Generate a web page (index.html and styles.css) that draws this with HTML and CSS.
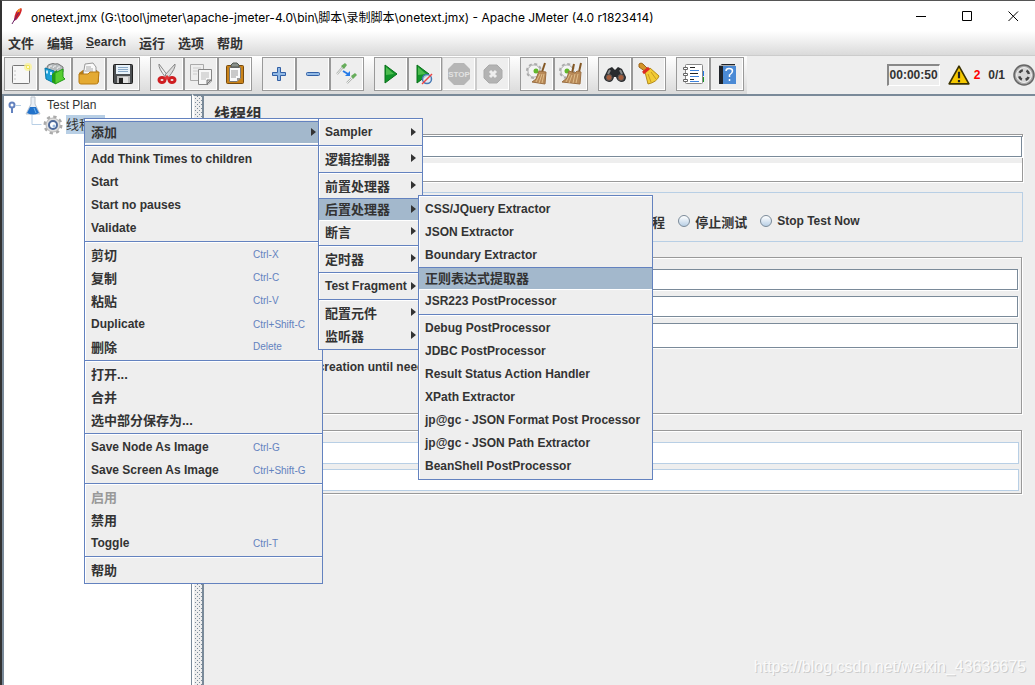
FILE: index.html
```html
<!DOCTYPE html>
<html lang="zh-CN">
<head>
<meta charset="utf-8">
<title>Apache JMeter</title>
<link rel="stylesheet" href="styles.css">
</head>
<body>
<header class="titlebar">
  <svg class="app-icon" viewBox="0 0 12 18"><path d="M10 1Q12 2 9 8Q7 12 3 14Q3 9 5 5Q7 2 10 1Z" fill="#d22128"/><path d="M10 1Q7 2 6 5L8 6Z" fill="#f59a23"/><path d="M4 10L3 14L6 12Z" fill="#9b2575"/><path d="M8 5L1 17" stroke="#6d2466" stroke-width="1"/></svg>
  <h1 class="title">onetext.jmx (G:\tool\jmeter\apache-jmeter-4.0\bin\脚本\录制脚本\onetext.jmx) - Apache JMeter (4.0 r1823414)</h1>
  <div class="window-buttons">
    <button aria-label="最小化"><svg viewBox="0 0 11 11"><path d="M0 5.5H10"/></svg></button>
    <button aria-label="最大化"><svg viewBox="0 0 11 11"><path d="M.5 .5H9.5V9.5H.5Z"/></svg></button>
    <button aria-label="关闭"><svg viewBox="0 0 11 11"><path d="M.5 .5L10 10M10 .5L.5 10"/></svg></button>
  </div>
</header>
<nav class="menubar">
  <button>文件</button><button>编辑</button><button class="latin"><u>S</u>earch</button><button>运行</button><button>选项</button><button>帮助</button>
</nav>
<div class="toolbar">
  <div class="tools">
    <div class="tool-group">
      <button aria-label="新建"><svg viewBox="0 0 24 24"><rect x="3.500" y="3.500" width="17" height="18" rx="1" fill="#f7f7f7" stroke="#777"/><path d="M5.500 9h1M5.500 13h1M5.500 17h1" stroke="#999"/><circle cx="19" cy="5" r="4" fill="#faf29a" opacity=".8"/><circle cx="19" cy="5" r="2" fill="#f4e84a"/><circle cx="19" cy="5" r="1" fill="#fff"/></svg></button>
      <button aria-label="模板"><svg viewBox="0 0 24 24"><path d="M4 5Q5 2 8 2Q10 1 12 2Q15 1 17 3L20 5V10L4 9Z" fill="#b6bbbd" stroke="#777"/><path d="M6 6Q7 3 9 4M10 6Q11 3 13 4M14 7Q15 4 17 5" stroke="#f2f2f2" fill="none"/><path d="M2 6L11 9V21L3 17Z" fill="#1d9fd6" stroke="#0878a8"/><path d="M4 8.500v3M8 10v3" stroke="#c8efff" stroke-width="2"/><path d="M9 12L14 8V20L12 22L9 20Z" fill="#239b18"/><path d="M12 11L20 7V15L22 17L12 22Z" fill="#57cd31" stroke="#239b18"/></svg></button>
      <button aria-label="打开"><svg viewBox="0 0 24 24"><path d="M2 11L6 8H20L22 13V20H3Z" fill="#b57b15"/><path d="M8 2L16 1L19 5V14H6Z" fill="#fafafa" stroke="#999"/><path d="M9 5h5M9 7h7M8 9h8" stroke="#aaa"/><path d="M2 12H11L13 10H22L21 21Q20 22 18 22H4Q2 22 2 20Z" fill="#e4aa32" stroke="#b77b12"/></svg></button>
      <button aria-label="保存"><svg viewBox="0 0 24 24"><rect x="2.500" y="2.500" width="19" height="19" rx="1" fill="#4b4e51" stroke="#222"/><path d="M5 3H19V12H5Z" fill="#e8f2fa"/><path d="M7 5.500h10M7 7.500h10M7 9.500h10" stroke="#8baac8"/><rect x="6" y="14" width="13" height="7" fill="#bbb"/><rect x="8" y="16" width="4" height="5" fill="#222"/><rect x="12" y="15" width="5" height="6" fill="#e5e5e5"/></svg></button>
    </div>
    <div class="tool-group">
      <button aria-label="剪切"><svg viewBox="0 0 24 24"><path d="M4 2Q3 6 11 16L13 14Z" fill="#eee" stroke="#888"/><path d="M20 2Q21 6 13 16L10 13Z" fill="#ddd" stroke="#888"/><g fill="none" stroke="#cf1e22" stroke-width="3"><ellipse cx="7" cy="18" rx="3" ry="2.500"/><ellipse cx="17" cy="18" rx="3" ry="2.500"/></g><path d="M9 16l3-3 3 3-3 2z" fill="#df3436"/></svg></button>
      <button aria-label="复制"><svg viewBox="0 0 24 24"><path d="M1.500 2.500H14.500V18.500H1.500Z" fill="#eee" stroke="#aaa"/><path d="M4 6h8M4 9h6M4 12h4" stroke="#ccc"/><path d="M9.500 7.500H22.500V19L19 22.500H9.500Z" fill="#f7f7f7" stroke="#888"/><path d="M12 11h8M12 13h8M12 15h8M12 17h5" stroke="#bbb"/><path d="M18 22V18H22Z" fill="#ccc" stroke="#777"/></svg></button>
      <button aria-label="粘贴"><svg viewBox="0 0 24 24"><rect x="3.500" y="3.500" width="17" height="18" rx="1" fill="#c98218" stroke="#774a0d"/><path d="M6.500 5.500H17.500V16L14 19.500H6.500Z" fill="#fafafa" stroke="#777"/><path d="M8 9h7M8 11h7M8 13h7M8 15h5" stroke="#999"/><path d="M8 5V3L10 1H14L16 3V5Z" fill="#89908a" stroke="#505750"/><path d="M14 19V16H18Z" fill="#999"/></svg></button>
    </div>
    <div class="tool-group">
      <button aria-label="展开"><svg viewBox="0 0 24 24"><path d="M10.500 5.500h3v5h5v3h-5v5h-3v-5h-5v-3h5z" fill="#91b9e5" stroke="#315fa5" stroke-linejoin="round"/></svg></button>
      <button aria-label="折叠"><svg viewBox="0 0 24 24"><rect x="5.500" y="10.500" width="13" height="3" rx="1" fill="#91b9e5" stroke="#315fa5"/></svg></button>
      <button aria-label="切换"><svg viewBox="0 0 24 24"><path d="M2 12L8 5" stroke="#aaa" stroke-width="2"/><path d="M2 12L8 5" stroke="#eef5ee"/><path d="M6 4L10 1L12 3L9 7Z" fill="#459c36" opacity=".8"/><path d="M12 21L17 16" stroke="#aaa" stroke-width="2"/><path d="M12 21L17 16" stroke="#eef5ee"/><path d="M16 14L20 11L22 13L18 17Z" fill="#459c36" opacity=".8"/><path d="M8 9L13 12" stroke="#267be8" stroke-width="2"/><path d="M10 14H15V9Z" fill="#267be8"/></svg></button>
    </div>
    <div class="tool-group">
      <button aria-label="启动"><svg viewBox="0 0 24 24"><path d="M6 3L18 12L6 21Z" fill="#11952a" stroke="#087019"/><path d="M7 5L15 12L7 13Z" fill="#4dbc4f"/></svg></button>
      <button aria-label="不间断启动"><svg viewBox="0 0 24 24"><path d="M4 3L16 12L4 21Z" fill="#11952a" stroke="#087019"/><path d="M5 5L13 12L5 13Z" fill="#4dbc4f"/><circle cx="14" cy="17" r="4.500" fill="#dfe8f5" fill-opacity=".8" stroke="#4779b5" stroke-width="1.500"/><path d="M9 22L19 12" stroke="#e44" stroke-width="1.500"/></svg></button>
      <button disabled aria-label="停止"><svg viewBox="0 0 24 24"><path d="M7 1H17L23 7V17L17 23H7L1 17V7Z" fill="#b6b6b6"/><text x="12" y="15" class="stop-text">STOP</text></svg></button>
      <button disabled aria-label="关闭"><svg viewBox="0 0 24 24"><path d="M8 3H16L21 8V16L16 21H8L3 16V8Z" fill="#b3b3b3" stroke="#aaa"/><path d="M9 9L15 15M15 9L9 15" stroke="#eee" stroke-width="3"/></svg></button>
    </div>
    <div class="tool-group">
      <button aria-label="清除"><svg viewBox="0 0 24 24"><circle cx="9" cy="9" r="7" fill="#ddd" stroke="#aaa" stroke-width="2" stroke-dasharray="3 2.500"/><circle cx="9" cy="9" r="6" fill="#f4f4f4" stroke="#bbb"/><circle cx="11" cy="9" r="2.500" fill="#63b82d"/><path d="M20 1L17 10" stroke="#835724" stroke-width="2"/><path d="M14 9L21 10L20 22L7 20L11 17Z" fill="#b98a58" stroke="#9b6f42"/><path d="M15 12L11 20M17 12L14 21M19 12L17 21" stroke="#e0bd89"/></svg></button>
      <button aria-label="全部清除"><svg viewBox="0 0 24 24"><circle cx="8" cy="9" r="7" fill="#ddd" stroke="#aaa" stroke-width="2" stroke-dasharray="3 2.500"/><circle cx="8" cy="9" r="6" fill="#f4f4f4" stroke="#bbb"/><circle cx="8" cy="9" r="2.500" fill="#63b82d"/><path d="M15 2L13 11M22 1L20 10" stroke="#835724" stroke-width="2"/><path d="M10 9L16 11L18 9L22 10L21 22L3 20L8 16Z" fill="#b98a58" stroke="#9b6f42"/><path d="M11 12L7 20M13 13L10 21M16 12L14 21M19 12L17 21" stroke="#e0bd89"/></svg></button>
    </div>
    <div class="tool-group">
      <button aria-label="查找"><svg viewBox="0 0 24 24"><path d="M1 15L5 7L9 5L12 8L15 5L19 7L23 15Q23 20 18 20Q14 19 13 15H11Q10 20 6 20Q1 19 1 15Z" fill="#292b2e"/><path d="M7 8L5 12M17 8L19 12" stroke="#888" stroke-width="2"/><circle cx="6" cy="15.500" r="3" fill="#a75d3b" stroke="#555"/><circle cx="18" cy="15.500" r="3" fill="#a75d3b" stroke="#555"/></svg></button>
      <button aria-label="重置查找"><svg viewBox="0 0 24 24"><path d="M2 2Q4 0 6 2L12 8L9 10L2 5Z" fill="#d49428" stroke="#9c651b"/><path d="M8 10L13 6L22 14Q20 20 11 22Z" fill="#f2cc35" stroke="#b58a1a"/><path d="M6 11L12 6" stroke="#dd2b22" stroke-width="3"/><path d="M11 12L14 20M14 10L19 17" stroke="#c89a22"/></svg></button>
    </div>
    <div class="tool-group">
      <button aria-label="函数助手"><svg viewBox="0 0 24 24"><path d="M21 9h2v5h-2z" fill="#2279e6"/><path d="M21 15h2v5h-2z" fill="#169b24"/><rect x="4.500" y="2.500" width="17" height="19" rx="1" fill="#fff" stroke="#888"/><path d="M9 5.500h5M9 11.500h8M9 17.500h4" stroke="#222"/><path d="M9 8.500h9M9 14.500h9M9 19.500h9" stroke="#3e83dc"/><g fill="#fff" stroke="#666"><path d="M2.500 5.500h4v2h-4zM2.500 11.500h4v2h-4zM2.500 17.500h4v2h-4z"/></g></svg></button>
      <button aria-label="帮助"><svg viewBox="0 0 24 24"><path d="M4 4L7 2H20V4L18 22H4Z" fill="#20242a"/><rect x="8" y="4" width="13" height="18" fill="#4b8ad5"/><path d="M5 3.500H20" stroke="#aaa"/><path d="M11 9Q11 6.500 14 6.500Q17.500 6.500 17.500 9Q17.500 11 14.500 13V15M14.500 17V19" fill="none" stroke="#fff" stroke-width="1.500"/></svg></button>
    </div>
  </div>
  <div class="status">
    <output class="timer">00:00:50</output>
    <svg class="warn" viewBox="0 0 20 18"><path d="M10 1L19 17H1Z" fill="#f5c800" stroke="#3b3200" stroke-width="1.500" stroke-linejoin="round"/><path d="M10 6V12M10 13.500V15.500" stroke="#222" stroke-width="2"/></svg>
    <span class="errors">2</span>
    <span class="threads">0/1</span>
    <svg class="light" viewBox="0 0 22 22"><circle cx="11" cy="11" r="10" fill="#aaa" stroke="#666" stroke-width="1.500"/><circle cx="11" cy="11" r="7.500" fill="#d5d5d5" stroke="#eee"/><circle cx="11" cy="11" r="5" fill="none" stroke="#444" stroke-width="2.500" stroke-dasharray="4 3.850" stroke-dashoffset="-2"/></svg>
  </div>
</div>
<div class="workspace">
  <aside class="tree">
    <div class="node">
      <svg class="handle" viewBox="0 0 16 20"><circle cx="5" cy="9" r="2.500" fill="#fff" stroke="#6382bf" stroke-width="2"/><path d="M5 12V17" stroke="#6382bf" stroke-width="2"/><path d="M8 9.500H14" stroke="#b8cfe5"/></svg>
      <svg class="flask" viewBox="0 0 20 20"><path d="M8 1H12V8L17 18H3L8 8Z" fill="#e8eef5" stroke="#bbc3cc"/><path d="M7 11H13L16 17Q10 20 4 17Z" fill="#2272ca"/><path d="M11 12L13 17" stroke="#6cb2ef"/></svg>
      <span>Test Plan</span>
    </div>
    <div class="node child">
      <svg class="branch" viewBox="0 0 12 20"><path d="M1.500 0V9.500H11" fill="none" stroke="#b8cfe5"/></svg>
      <svg class="gear" viewBox="0 0 20 20"><circle cx="10" cy="10" r="8" fill="none" stroke="#aaa" stroke-width="3" stroke-dasharray="3.200 3.083"/><circle cx="10" cy="10" r="7" fill="#dedede" stroke="#bbb"/><circle cx="10" cy="10" r="4" fill="#fff" stroke="#4d699a" stroke-width="2"/><circle cx="11" cy="11" r="1.500" fill="#9bbbe3"/></svg>
      <span class="selected">线程组</span>
    </div>
  </aside>
  <div class="divider"></div>
  <main class="main">
    <h2 class="heading">线程组</h2>
    <section class="group naming">
      <input class="field" type="text" aria-label="名称">
      <input class="field plain" type="text" aria-label="注释">
    </section>
    <section class="group actions">
      <label><input type="radio" name="action">继续</label>
      <label class="latin"><input type="radio" name="action">Start Next Thread Loop</label>
      <label><input type="radio" name="action">停止线程</label>
      <label><input type="radio" name="action">停止测试</label>
      <label class="latin"><input type="radio" name="action">Stop Test Now</label>
    </section>
    <section class="group properties">
      <input class="field" type="text" aria-label="线程数">
      <input class="field" type="text" aria-label="Ramp-Up Period">
      <input class="field tall" type="text" aria-label="循环次数">
      <label class="latin delay"><input type="checkbox">Delay Thread creation until needed</label>
    </section>
    <section class="group scheduler">
      <input class="field" type="text" disabled aria-label="持续时间">
      <input class="field" type="text" disabled aria-label="启动延迟">
    </section>
  </main>
</div>
<div class="menu context" role="menu">
  <div class="item open" role="menuitem" tabindex="0">添加<i class="arrow"></i>
    <div class="menu sub types" role="menu">
      <button class="item latin">Sampler<i class="arrow"></i></button>
      <hr>
      <button class="item">逻辑控制器<i class="arrow"></i></button>
      <hr>
      <button class="item">前置处理器<i class="arrow"></i></button>
      <div class="item open" role="menuitem" tabindex="0">后置处理器<i class="arrow"></i>
        <div class="menu sub post" role="menu">
          <button class="item latin">CSS/JQuery Extractor</button>
          <button class="item latin">JSON Extractor</button>
          <button class="item latin">Boundary Extractor</button>
          <button class="item open">正则表达式提取器</button>
          <button class="item latin">JSR223 PostProcessor</button>
          <hr>
          <button class="item latin">Debug PostProcessor</button>
          <button class="item latin">JDBC PostProcessor</button>
          <button class="item latin">Result Status Action Handler</button>
          <button class="item latin">XPath Extractor</button>
          <button class="item latin">jp@gc - JSON Format Post Processor</button>
          <button class="item latin">jp@gc - JSON Path Extractor</button>
          <button class="item latin">BeanShell PostProcessor</button>
        </div>
      </div>
      <button class="item">断言<i class="arrow"></i></button>
      <hr>
      <button class="item">定时器<i class="arrow"></i></button>
      <hr>
      <button class="item latin">Test Fragment<i class="arrow"></i></button>
      <hr>
      <button class="item">配置元件<i class="arrow"></i></button>
      <button class="item">监听器<i class="arrow"></i></button>
    </div>
  </div>
  <hr>
  <button class="item latin">Add Think Times to children</button>
  <button class="item latin">Start</button>
  <button class="item latin">Start no pauses</button>
  <button class="item latin">Validate</button>
  <hr>
  <button class="item">剪切<kbd>Ctrl-X</kbd></button>
  <button class="item">复制<kbd>Ctrl-C</kbd></button>
  <button class="item">粘贴<kbd>Ctrl-V</kbd></button>
  <button class="item latin">Duplicate<kbd>Ctrl+Shift-C</kbd></button>
  <button class="item">删除<kbd>Delete</kbd></button>
  <hr>
  <button class="item">打开...</button>
  <button class="item">合并</button>
  <button class="item">选中部分保存为...</button>
  <hr>
  <button class="item latin">Save Node As Image<kbd>Ctrl-G</kbd></button>
  <button class="item latin">Save Screen As Image<kbd>Ctrl+Shift-G</kbd></button>
  <hr>
  <button class="item" disabled>启用</button>
  <button class="item">禁用</button>
  <button class="item latin">Toggle<kbd>Ctrl-T</kbd></button>
  <hr>
  <button class="item">帮助</button>
</div>
<div class="watermark">https://blog.csdn.net/weixin_43636675</div>
</body>
</html>
```
FILE: styles.css
```css
* { box-sizing: border-box; }
body {
  margin: 0;
  min-height: 100vh;
  display: flex;
  flex-direction: column;
  position: relative;
  overflow: hidden;
  border-left: 2px solid #333;
  border-top: 1px solid #555;
  background: #eee;
  color: #333;
  font: bold 13px "Liberation Sans", "Noto Sans CJK SC", sans-serif;
}
button, input { font: inherit; color: inherit; margin: 0; }
button { border: 0; padding: 0; background: none; }
.menubar .latin, .item.latin, .latin { font-size: 12px; }

.titlebar { height: 30px; display: flex; align-items: center; background: #fff; color: #000; padding-left: 9px; }
.app-icon { width: 12px; height: 18px; flex: none; }
.title { margin: 0 0 0 8px; flex: 1; font: 12px Inter, "Noto Sans CJK SC", sans-serif; white-space: nowrap; }
.window-buttons { display: flex; gap: 3px; }
.window-buttons button { width: 43px; height: 28px; display: flex; align-items: center; justify-content: center; }
.window-buttons svg { width: 11px; height: 11px; fill: none; stroke: #000; }

.menubar { height: 25px; display: flex; align-items: center; gap: 13px; padding: 0 6px 2px; background: linear-gradient(#fff, #dadada); border-bottom: 1px solid #ccc; }

.toolbar { height: 38px; display: flex; justify-content: space-between; }
.tools { display: flex; gap: 10px; padding: 1px 3px 3px 2px; background: linear-gradient(#fff, #dadada); }
.tool-group { display: flex; }
.tool-group button { width: 34px; height: 34px; padding: 4px; background: #eee; border: 1px solid #999; box-shadow: inset -1px -1px #fff; }
.tool-group button:disabled { border-color: #ccc; }
.tool-group svg { display: block; width: 24px; height: 24px; }
.stop-text { font-size: 8px; fill: #e2e2e2; text-anchor: middle; }
.status { display: flex; align-items: center; font-size: 12px; }
.timer { height: 22px; line-height: 18px; padding: 0 1px; border: 2px solid; border-color: #888 #fff #fff #888; border-right-width: 1px; border-bottom-width: 1px; }
.warn { width: 22px; height: 20px; margin: 0 4px 0 8px; }
.errors { color: #f00; margin-right: 8px; }
.threads { margin-right: 8px; }
.light { width: 22px; height: 22px; }

.workspace { flex: 1; display: flex; }
.tree { width: 190px; flex: none; background: #fff; border: solid #7a8a99; border-width: 2px 1px 0 2px; font-weight: normal; font-size: 12px; }
.node { display: flex; height: 19px; align-items: center; padding-left: 3px; }
.node span { line-height: 19px; }
.handle { width: 16px; height: 20px; }
.flask { width: 20px; height: 20px; margin-right: 4px; }
.child { padding-left: 26px; }
.branch { width: 13px; height: 20px; }
.gear { width: 20px; height: 20px; margin-right: 3px; }
.selected { background: #b8cfe5; font-size: 13px; }
.divider {
  width: 10px;
  flex: none;
  border-top: 2px solid #7a8a99;
  border-left: 2px solid #fff;
  background-color: #eee;
  background-image: linear-gradient(#7a8a99, #7a8a99), linear-gradient(#7a8a99, #7a8a99);
  background-size: 1px 1px;
  background-repeat: no-repeat;
  background: conic-gradient(from 270deg at 1px 1px, #7a8a99 90deg, transparent 0) 3px 0 / 4px 4px,
    conic-gradient(from 270deg at 1px 1px, #7a8a99 90deg, transparent 0) 1px 2px / 4px 4px, #eee;
}
.main { flex: 1; min-width: 0; border: solid #7a8a99; border-width: 2px 0 0 2px; padding: 0 12px 0 6px; }
.heading { margin: 0; height: 38px; line-height: 38px; padding-left: 4px; font-size: 16px; }
.group { border: 1px solid #999; box-shadow: 1px 1px #fff, inset 1px 1px #fff; display: flex; flex-direction: column; }
.field { width: 100%; height: 21px; background: #fff; border: 1px solid #7a8a99; box-shadow: 1px 1px #fff; border-radius: 0; padding: 0 2px; }
.field:disabled { height: 22px; border-color: #b8cfe5; box-shadow: none; }
.field.plain { height: 18px; border: 0; box-shadow: none; }
.field.tall { height: 25px; }
.naming { gap: 6px; padding-top: 1px; }
.actions { flex-direction: row; align-items: center; justify-content: center; gap: 13px; height: 50px; padding: 8px 0 0 4px; margin-top: 10px; border-color: #b8cfe5; box-shadow: none; }
.actions label, .delay { display: flex; align-items: center; gap: 5px; }
.actions input { appearance: none; width: 12px; height: 12px; border: 1px solid #7a8a99; border-radius: 50%; background: linear-gradient(#fff, #b8cfe5); }
.properties { margin: 15px 1px 0 0; padding: 11px 3px 33px; gap: 6px; }
.delay { height: 26px; padding-left: 7px; }
.scheduler { margin: 16px 1px 0 0; padding: 11px 2px 2px; gap: 5px; }

.menu { position: absolute; z-index: 2; background: #eee; border: 1px solid #6382bf; box-shadow: inset 1px 1px #fff; padding: 2px 0 1px; }
.context { left: 82px; top: 117px; width: 239px; }
.sub { left: 100%; top: -4px; margin-left: -4px; }
.types { width: 105px; }
.post { width: 235px; }
.item { position: relative; display: flex; align-items: center; justify-content: space-between; width: 100%; height: 23px; padding: 0 6px 3px; text-align: left; white-space: nowrap; }
.item.latin { padding-bottom: 1px; }
.item.open { background: #a3b8cc; border-top: 1px solid #6382bf; border-bottom: 1px solid #fff; padding-bottom: 2px; }
.item:disabled { color: #999; }
.item kbd { width: 63px; font: 10px "Liberation Sans", sans-serif; color: #6382bf; }
.menu hr { height: 2px; margin: 1px 0; border: 0; border-top: 1px solid #6382bf; background: #fff; }
.arrow { width: 0; border: solid transparent; border-width: 4px 0 4px 5px; border-left-color: #333; }

.watermark { position: absolute; right: 9px; bottom: 9px; font-size: 16px; font-weight: normal; color: #fafafa; text-shadow: 1px 1px #ccc; }
```
